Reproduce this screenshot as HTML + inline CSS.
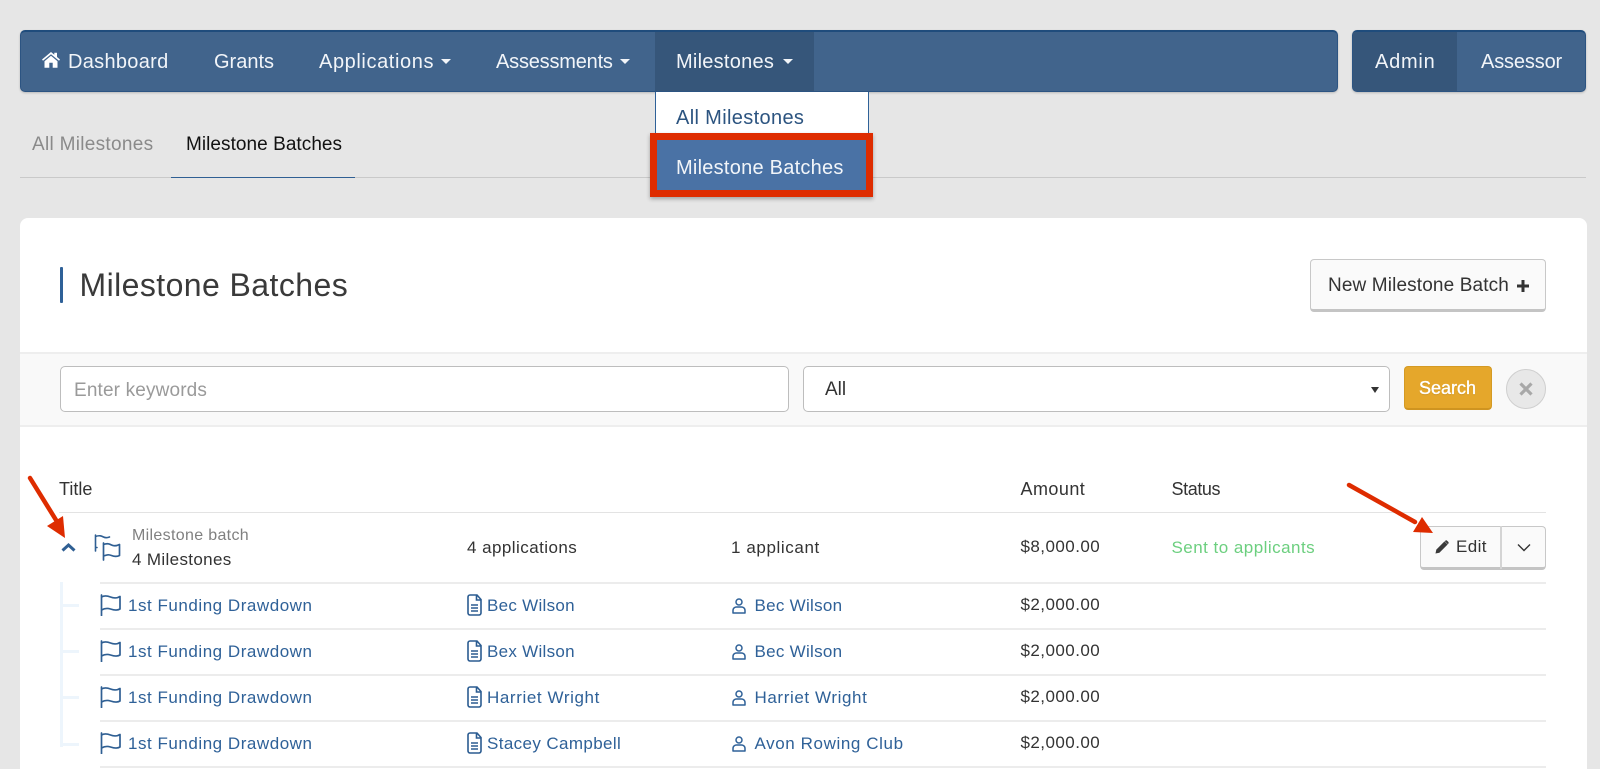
<!DOCTYPE html>
<html lang="en"><head><meta charset="utf-8"><title>Milestone Batches</title>
<style>
html,body{margin:0;padding:0;width:1600px;height:769px;overflow:hidden;background:#e6e6e6}
body{position:relative;font-family:"Liberation Sans",sans-serif;color:#333}
.a,.t{position:absolute}
.t{white-space:nowrap;line-height:24px;height:24px}
.nav{font-size:20px;color:#f2f5f9;top:50px}
.f17{font-size:17px}
.lnk{color:#2f6198;font-size:17px}
.line{position:absolute;left:100px;width:1446px;height:2px;background:#ececec}
.caret{position:absolute;width:0;height:0;border-left:5px solid transparent;border-right:5px solid transparent;border-top:5px solid #f2f5f9}
svg{position:absolute;overflow:visible}
</style></head><body>
<svg width="0" height="0" style="position:absolute"><defs>
<symbol id="flag" viewBox="0 0 21 22"><path d="M1.500 1v20.500M1.500 3C5 1 8 2 10.500 3S17 4.500 20 2.500V15C17 17 13.500 16 10.500 15S5 14 1.500 16" fill="none" stroke="#2f5f93" stroke-width="1.700" stroke-linecap="round" stroke-linejoin="round"/></symbol>
<symbol id="doc" viewBox="0 0 15 22"><path d="M1 3a2 2 0 0 1 2-2h7l4 4.500V19a2 2 0 0 1-2 2H3a2 2 0 0 1-2-2zM9.500 1.500V6H14M4 11h7M4 14h7M4 17h7" fill="none" stroke="#2b5c91" stroke-width="1.600"/></symbol>
<symbol id="user" viewBox="0 0 14 16"><circle cx="7" cy="4" r="3" fill="none" stroke="#2f6198" stroke-width="1.500"/><path d="M1 15h12v-2.500C13 10 11 9 9.500 9h-5C3 9 1 10 1 12.500z" fill="none" stroke="#2f6198" stroke-width="1.500" stroke-linejoin="round"/></symbol>
</defs></svg>

<!-- top nav -->
<div class="a" style="left:20px;top:30px;width:1318px;height:62px;box-sizing:border-box;background:#41648c;border:1px solid #2c5482;border-top:2px solid #1f4c7c;border-radius:5px;box-shadow:0 1px 2px rgba(0,0,0,.2)"></div>
<div class="a" style="left:655px;top:32px;width:159px;height:59px;background:#36567a"></div>
<svg style="left:42px;top:52px" width="18" height="16" viewBox="0 0 18 16"><path d="M9 0 0 7.500l1 1.300L9 2.300l8 6.500L18 7.500l-3-2.500V.800h-2.700v1.900zM2.500 9.200V15.800H7.300V10.800h3.400V15.800h4.800V9.200L9 3.800z" fill="#fff"/></svg>
<span class="t nav" style="left:68px;letter-spacing:.3px">Dashboard</span>
<span class="t nav" style="left:214px">Grants</span>
<span class="t nav" style="left:319px;letter-spacing:.6px">Applications</span>
<span class="caret" style="left:441px;top:59px"></span>
<span class="t nav" style="left:496px;letter-spacing:-.2px">Assessments</span>
<span class="caret" style="left:620px;top:59px"></span>
<span class="t nav" style="left:676px;letter-spacing:.25px">Milestones</span>
<span class="caret" style="left:783px;top:59px"></span>

<div class="a" style="left:1352px;top:30px;width:234px;height:62px;box-sizing:border-box;background:#41648c;border:1px solid #2c5482;border-top:2px solid #1f4c7c;border-radius:5px;box-shadow:0 1px 2px rgba(0,0,0,.2)"></div>
<div class="a" style="left:1353px;top:32px;width:104px;height:59px;background:#36567a;border-radius:0 0 0 4px"></div>
<span class="t nav" style="left:1375px;letter-spacing:.75px">Admin</span>
<span class="t nav" style="left:1481px;letter-spacing:-.15px">Assessor</span>

<!-- tabs -->
<div class="a" style="left:20px;top:177px;width:1566px;height:1px;background:#c9c9c9"></div>
<div class="a" style="left:171px;top:177px;width:184px;height:1px;background:#2f5f93"></div>
<span class="t" style="left:32px;top:133px;font-size:19px;color:#8a8a8a;letter-spacing:.3px">All Milestones</span>
<span class="t" style="left:186px;top:133px;font-size:19px;color:#111;letter-spacing:.05px">Milestone Batches</span>

<!-- dropdown -->
<div class="a" style="left:655px;top:92px;width:214px;height:50px;box-sizing:border-box;background:#fff;border:1px solid #2f6198;border-top:none"></div>
<span class="t" style="left:676px;top:106px;font-size:20px;color:#2c5480;letter-spacing:.35px">All Milestones</span>
<div class="a" style="left:650px;top:133px;width:223px;height:64px;box-sizing:border-box;background:#4a72a5;border:7px solid #de2c00;box-shadow:0 2px 4px rgba(0,0,0,.3)"></div>
<span class="t" style="left:676px;top:156px;font-size:20px;color:#f2f5f9;letter-spacing:.25px">Milestone Batches</span>

<!-- card -->
<div class="a" style="left:20px;top:218px;width:1567px;height:560px;background:#fff;border-radius:8px"></div>
<div class="a" style="left:60px;top:267px;width:2.500px;height:36px;background:#2f6198;border-radius:1px"></div>
<span class="t" style="left:79.500px;top:267px;font-size:32px;line-height:36px;height:36px;color:#3a3a3a;letter-spacing:.42px">Milestone Batches</span>
<div class="a" style="left:1310px;top:259px;width:236px;height:53px;box-sizing:border-box;background:#fafafa;border:1px solid #c8c8c8;border-bottom:3px solid #c4c4c4;border-radius:4px"></div>
<span class="t" style="left:1328px;top:274px;font-size:19px;color:#333;letter-spacing:.13px">New Milestone Batch</span>
<svg style="left:1517px;top:280px" width="12" height="12" viewBox="0 0 12 12"><path d="M6 0v12M0 6h12" stroke="#333" stroke-width="3"/></svg>

<!-- search band -->
<div class="a" style="left:20px;top:352px;width:1567px;height:75px;box-sizing:border-box;background:#f9f9f9;border-top:2px solid #eee;border-bottom:2px solid #eee"></div>
<div class="a" style="left:60px;top:366px;width:729px;height:46px;box-sizing:border-box;background:#fff;border:1px solid #bdbdbd;border-radius:5px"></div>
<span class="t" style="left:74px;top:379px;font-size:19px;color:#9a9a9a;letter-spacing:.15px">Enter keywords</span>
<div class="a" style="left:803px;top:366px;width:587px;height:46px;box-sizing:border-box;background:#fff;border:1px solid #bdbdbd;border-radius:5px"></div>
<span class="t" style="left:825px;top:378px;font-size:19px;color:#333">All</span>
<span class="a" style="left:1371px;top:387px;width:0;height:0;border-left:4.500px solid transparent;border-right:4.500px solid transparent;border-top:6px solid #333"></span>
<div class="a" style="left:1404px;top:366px;width:88px;height:44px;box-sizing:border-box;background:#e5a72b;border:1px solid #d49a24;border-bottom:2px solid #cf9420;border-radius:4px"></div>
<span class="t" style="left:1419px;top:376px;font-size:18px;color:#fff;-webkit-text-stroke:.35px #fff;text-shadow:0 1px 1px rgba(0,0,0,.12)">Search</span>
<div class="a" style="left:1506px;top:369px;width:40px;height:40px;box-sizing:border-box;background:#e8e8e8;border:1px solid #cfcfcf;border-radius:50%"></div>
<svg style="left:1519px;top:382px" width="14" height="14" viewBox="0 0 14 14"><path d="M1.500 1.500l11 11M12.500 1.500l-11 11" stroke="#a8a8a8" stroke-width="3.200"/></svg>

<!-- table head -->
<span class="t" style="left:59px;top:477px;font-size:18px;color:#333">Title</span>
<span class="t" style="left:1020.500px;top:477px;font-size:18px;color:#333;letter-spacing:.45px">Amount</span>
<span class="t" style="left:1171.500px;top:477px;font-size:18px;color:#333;letter-spacing:-.4px">Status</span>
<div class="a" style="left:59px;top:512px;width:1487px;height:1px;background:#e3e3e3"></div>

<!-- batch row -->
<svg style="left:61px;top:543px" width="15" height="9" viewBox="0 0 15 9"><path d="M1.500 7.500L7.500 2l6 5.500" fill="none" stroke="#2f5f93" stroke-width="3"/></svg>
<svg style="left:94px;top:534px" width="27" height="27" viewBox="0 0 27 27"><path d="M1.500 1v16M1.500 2.500c4-1.500 6-.5 8 .5s4 .8 6 0M1.500 13.500H3" fill="none" stroke="#2f5f93" stroke-width="1.600" stroke-linecap="round"/><path d="M9.500 9v17M9.500 10.500c4-1.500 6-.5 8 .5s5 1 8-.5v11c-3 1.500-5.500 1-8 0s-4-1-8 .5" fill="none" stroke="#2f5f93" stroke-width="1.700" stroke-linecap="round" stroke-linejoin="round"/></svg>
<span class="t" style="left:132px;top:524px;font-size:16px;color:#808080;letter-spacing:.33px">Milestone batch</span>
<span class="t f17" style="left:132px;top:548px;color:#333;letter-spacing:.35px">4 Milestones</span>
<span class="t f17" style="left:467px;top:536px;color:#333;letter-spacing:.45px">4 applications</span>
<span class="t f17" style="left:731px;top:536px;color:#333;letter-spacing:.6px">1 applicant</span>
<span class="t f17" style="left:1020.500px;top:535px;color:#333;letter-spacing:.45px">$8,000.00</span>
<span class="t f17" style="left:1171.500px;top:536px;color:#6ccf7f;letter-spacing:.47px">Sent to applicants</span>
<div class="a" style="left:1420px;top:526px;width:126px;height:44px;box-sizing:border-box;background:#fafafa;border:1px solid #c8c8c8;border-bottom:3px solid #c4c4c4;border-radius:4px"></div>
<div class="a" style="left:1500px;top:526px;width:2px;height:43px;background:#d4d4d4"></div>
<svg style="left:1435px;top:540px" width="14" height="14" viewBox="0 0 14 14"><path d="M0.500 13.500 1.300 9.600 9.500 1.400 12.600 4.500 4.400 12.700zM10.300.700a1.300 1.300 0 0 1 1.800 0l1.200 1.200a1.300 1.300 0 0 1 0 1.800L12.800 4.200 9.800 1.200z" fill="#3a3a3a"/></svg>
<span class="t f17" style="left:1456px;top:535px;color:#333;letter-spacing:.4px">Edit</span>
<svg style="left:1517px;top:543px" width="14" height="9" viewBox="0 0 14 9"><path d="M1 1.500l6 6 6-6" fill="none" stroke="#333" stroke-width="1.400"/></svg>

<div class="line" style="top:582px"></div>
<div class="line" style="top:628px"></div>
<div class="line" style="top:674px"></div>
<div class="line" style="top:720px"></div>
<div class="line" style="top:766px"></div>

<!-- tree -->
<div class="a" style="left:60px;top:582px;width:3px;height:165px;background:#edf5fc"></div>
<div class="a" style="left:60px;top:604px;width:19px;height:3px;background:#edf5fc"></div>
<div class="a" style="left:60px;top:650px;width:19px;height:3px;background:#edf5fc"></div>
<div class="a" style="left:60px;top:696px;width:19px;height:3px;background:#edf5fc"></div>
<div class="a" style="left:60px;top:743px;width:19px;height:3px;background:#edf5fc"></div>

<!-- row 1 -->
<svg style="left:100px;top:594px" width="21" height="22"><use href="#flag"/></svg>
<span class="t lnk" style="left:128px;top:594px;letter-spacing:.53px">1st Funding Drawdown</span>
<svg style="left:467px;top:594px" width="15" height="22"><use href="#doc"/></svg>
<span class="t lnk" style="left:487px;top:594px;letter-spacing:.28px">Bec Wilson</span>
<svg style="left:732px;top:598px" width="14" height="16"><use href="#user"/></svg>
<span class="t lnk" style="left:754.500px;top:594px;letter-spacing:.28px">Bec Wilson</span>
<span class="t f17" style="left:1020.500px;top:593px;color:#333;letter-spacing:.45px">$2,000.00</span>
<!-- row 2 -->
<svg style="left:100px;top:640px" width="21" height="22"><use href="#flag"/></svg>
<span class="t lnk" style="left:128px;top:640px;letter-spacing:.53px">1st Funding Drawdown</span>
<svg style="left:467px;top:640px" width="15" height="22"><use href="#doc"/></svg>
<span class="t lnk" style="left:487px;top:640px;letter-spacing:.28px">Bex Wilson</span>
<svg style="left:732px;top:644px" width="14" height="16"><use href="#user"/></svg>
<span class="t lnk" style="left:754.500px;top:640px;letter-spacing:.28px">Bec Wilson</span>
<span class="t f17" style="left:1020.500px;top:639px;color:#333;letter-spacing:.45px">$2,000.00</span>
<!-- row 3 -->
<svg style="left:100px;top:686px" width="21" height="22"><use href="#flag"/></svg>
<span class="t lnk" style="left:128px;top:686px;letter-spacing:.53px">1st Funding Drawdown</span>
<svg style="left:467px;top:686px" width="15" height="22"><use href="#doc"/></svg>
<span class="t lnk" style="left:487px;top:686px;letter-spacing:.6px">Harriet Wright</span>
<svg style="left:732px;top:690px" width="14" height="16"><use href="#user"/></svg>
<span class="t lnk" style="left:754.500px;top:686px;letter-spacing:.6px">Harriet Wright</span>
<span class="t f17" style="left:1020.500px;top:685px;color:#333;letter-spacing:.45px">$2,000.00</span>
<!-- row 4 -->
<svg style="left:100px;top:732px" width="21" height="22"><use href="#flag"/></svg>
<span class="t lnk" style="left:128px;top:732px;letter-spacing:.53px">1st Funding Drawdown</span>
<svg style="left:467px;top:732px" width="15" height="22"><use href="#doc"/></svg>
<span class="t lnk" style="left:487px;top:732px;letter-spacing:.38px">Stacey Campbell</span>
<svg style="left:732px;top:736px" width="14" height="16"><use href="#user"/></svg>
<span class="t lnk" style="left:754.500px;top:732px;letter-spacing:.6px">Avon Rowing Club</span>
<span class="t f17" style="left:1020.500px;top:731px;color:#333;letter-spacing:.45px">$2,000.00</span>

<!-- annotation arrows -->
<svg style="left:0;top:0" width="1600" height="769" viewBox="0 0 1600 769">
<path d="M30 478L56 520" stroke="#de2c00" stroke-width="4.500" stroke-linecap="round"/>
<path d="M65 538L47 526 63 516z" fill="#de2c00"/>
<path d="M1349 485L1415 522" stroke="#de2c00" stroke-width="4.500" stroke-linecap="round"/>
<path d="M1433 533L1413 532 1422 517z" fill="#de2c00"/>
</svg>
</body></html>
